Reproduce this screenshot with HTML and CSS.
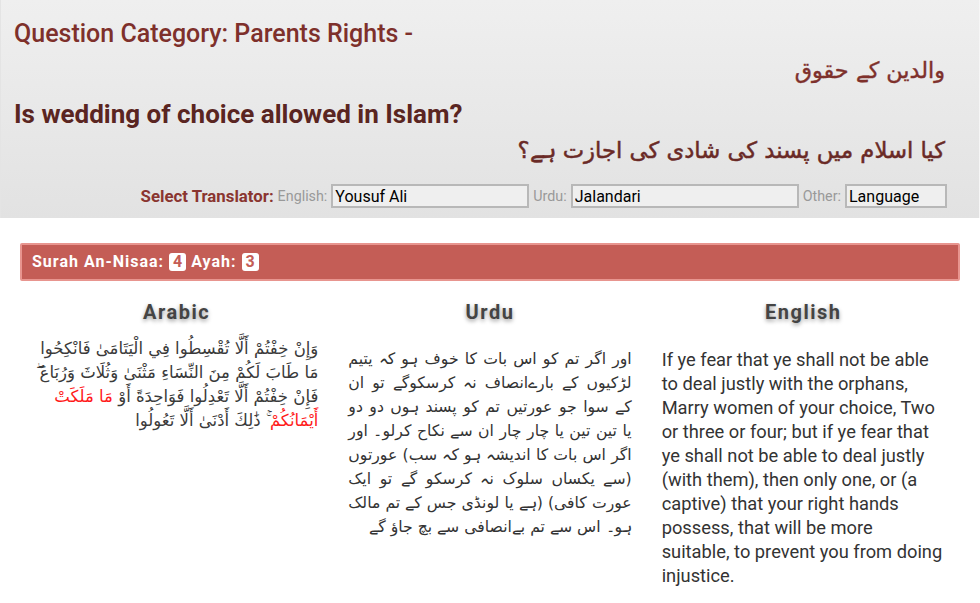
FILE: index.html
```html
<!doctype html>
<html>
  <head>
    <meta charset="utf-8" />
    <title>Is wedding of choice allowed in Islam?</title>
    <meta name="viewport" content="width=device-width, initial-scale=1.0" />
    <link rel="stylesheet" href="styles.css">
  </head>
  <body>
    <div class="question-header">
      <h2 class="category">Question Category: Parents Rights -</h2>
      <h2 class="category-ur" dir="rtl">والدین کے حقوق</h2>
      <h1 class="question">Is wedding of choice allowed in Islam?</h1>
      <h1 class="question-ur" dir="rtl">کیا اسلام میں پسند کی شادی کی اجازت ہے؟</h1>
      <div class="translator">
        <span class="translator-title">Select Translator:</span>
        <label class="lang-label">English:</label>
        <input class="lang-input english" type="text" value="Yousuf Ali" />
        <label class="lang-label">Urdu:</label>
        <input class="lang-input urdu" type="text" value="Jalandari" />
        <label class="lang-label">Other:</label>
        <input class="lang-input other" type="text" value="Language" />
      </div>
    </div>

    <div class="ayah-container">
      <div class="surah-bar">Surah An-Nisaa: <span class="badge">4</span> Ayah: <span class="badge">3</span></div>

      <div class="ayah-columns">
        <div class="ayah-col">
          <h3 class="col-title">Arabic</h3>
          <p class="arabic-text" dir="rtl">وَإِنْ خِفْتُمْ أَلَّا تُقْسِطُوا فِي الْيَتَامَىٰ فَانْكِحُوا مَا طَابَ لَكُمْ مِنَ النِّسَاءِ مَثْنَىٰ وَثُلَاثَ وَرُبَاعَ ۖ فَإِنْ خِفْتُمْ أَلَّا تَعْدِلُوا فَوَاحِدَةً أَوْ <span class="highlight">مَا مَلَكَتْ أَيْمَانُكُمْ</span> ۚ ذَٰلِكَ أَدْنَىٰ أَلَّا تَعُولُوا</p>
        </div>
        <div class="ayah-col">
          <h3 class="col-title">Urdu</h3>
          <p class="urdu-text" dir="rtl">اور اگر تم کو اس بات کا خوف ہو کہ یتیم لڑکیوں کے بارےانصاف نہ کرسکوگے تو ان کے سوا جو عورتیں تم کو پسند ہوں دو دو یا تین تین یا چار چار ان سے نکاح کرلو۔ اور اگر اس بات کا اندیشہ ہو کہ سب) عورتوں (سے یکساں سلوک نہ کرسکو گے تو ایک عورت کافی) (ہے یا لونڈی جس کے تم مالک ہو۔ اس سے تم بےانصافی سے بچ جاؤ گے</p>
        </div>
        <div class="ayah-col">
          <h3 class="col-title">English</h3>
          <p class="english-text">If ye fear that ye shall not be able to deal justly with the orphans, Marry women of your choice, Two or three or four; but if ye fear that ye shall not be able to deal justly (with them), then only one, or (a captive) that your right hands possess, that will be more suitable, to prevent you from doing injustice.</p>
        </div>
      </div>
    </div>
  </body>
</html>
```

FILE: styles.css
```css
:root {
  --font-normal: Roboto, "DejaVu Sans", sans-serif;
  --font-urdu: "DejaVu Sans", sans-serif;
  --color-maroon: #7e302b;
  --color-dark-maroon: #5a2521;
  --color-bar: #c45d56;
  --color-bar-border: #e8958f;
  --color-text: #333333;
}
* {
  box-sizing: border-box;
}
body {
  margin: 0;
  background: #ffffff;
  font-family: var(--font-normal);
  color: var(--color-text);
}
.question-header {
  width: 980px;
  padding: 20px 32px 10px 13px;
  background: linear-gradient(#efefef, #e2e2e2);
  border-left: 1px solid #e4e4e4;
  border-right: 1px solid #f6f6f6;
}
.category {
  margin: 0;
  font-size: 25px;
  line-height: 28px;
  font-weight: 500;
  color: var(--color-maroon);
}
.category-ur {
  margin: 2px 2px 0 0;
  font-family: var(--font-urdu);
  font-size: 22.3px;
  line-height: 40px;
  font-weight: normal;
  -webkit-text-stroke: 0.4px var(--color-maroon);
  color: var(--color-maroon);
}
.question {
  margin: 9px 0 0;
  font-size: 26px;
  line-height: 30px;
  font-weight: bold;
  color: var(--color-dark-maroon);
}
.question-ur {
  margin: 1px 2px 0 0;
  font-family: var(--font-urdu);
  font-size: 22.7px;
  line-height: 40px;
  font-weight: normal;
  -webkit-text-stroke: 0.5px #6a2a26;
  color: #6a2a26;
}
.translator {
  display: flex;
  justify-content: flex-end;
  align-items: center;
  gap: 4px;
  margin-top: 14px;
  height: 24px;
}
.translator-title {
  font-size: 16.8px;
  font-weight: bold;
  color: #8a3530;
}
.lang-label {
  font-size: 14.3px;
  color: #999999;
}
.lang-input {
  height: 24px;
  padding: 0 2px;
  margin: 0;
  border: 2px solid #b8b8b8;
  background: #efefef;
  font-family: var(--font-normal);
  font-size: 16px;
  color: #000000;
}
.lang-input.english {
  width: 198px;
}
.lang-input.urdu {
  width: 228px;
}
.lang-input.other {
  width: 102px;
}
.ayah-container {
  margin: 25px 20px 0;
}
.surah-bar {
  height: 38px;
  padding: 0 10px;
  background: var(--color-bar);
  border: 2px solid var(--color-bar-border);
  border-radius: 2px;
  color: #ffffff;
  font-size: 16px;
  line-height: 34px;
  font-weight: bold;
  letter-spacing: 1px;
}
.badge {
  display: inline-block;
  padding: 0 4px;
  line-height: 18px;
  background: #ffffff;
  color: var(--color-bar);
  border-radius: 3px;
  letter-spacing: 0;
}
.ayah-columns {
  display: grid;
  grid-template-columns: repeat(3, 1fr);
}
.ayah-col {
  padding: 0 15px;
}
.col-title {
  margin: 20px 0 0;
  text-align: center;
  font-size: 20px;
  line-height: 22px;
  font-weight: bold;
  letter-spacing: 1.5px;
  color: #444444;
  text-shadow: 0 2px 4px rgba(0, 0, 0, 0.4);
}
.arabic-text {
  margin: 14px 0 0;
  font-family: var(--font-urdu);
  font-size: 16.5px;
  line-height: 24px;
  color: #3a3a3a;
}
.highlight {
  color: #ff1a1a;
}
.urdu-text {
  margin: 24px 0 0;
  font-family: var(--font-urdu);
  font-size: 15.68px;
  line-height: 24px;
  text-align: justify;
  color: var(--color-text);
}
.english-text {
  margin: 25px 0 0;
  padding-right: 2px;
  font-size: 18.3px;
  line-height: 24px;
  color: var(--color-text);
}
```
